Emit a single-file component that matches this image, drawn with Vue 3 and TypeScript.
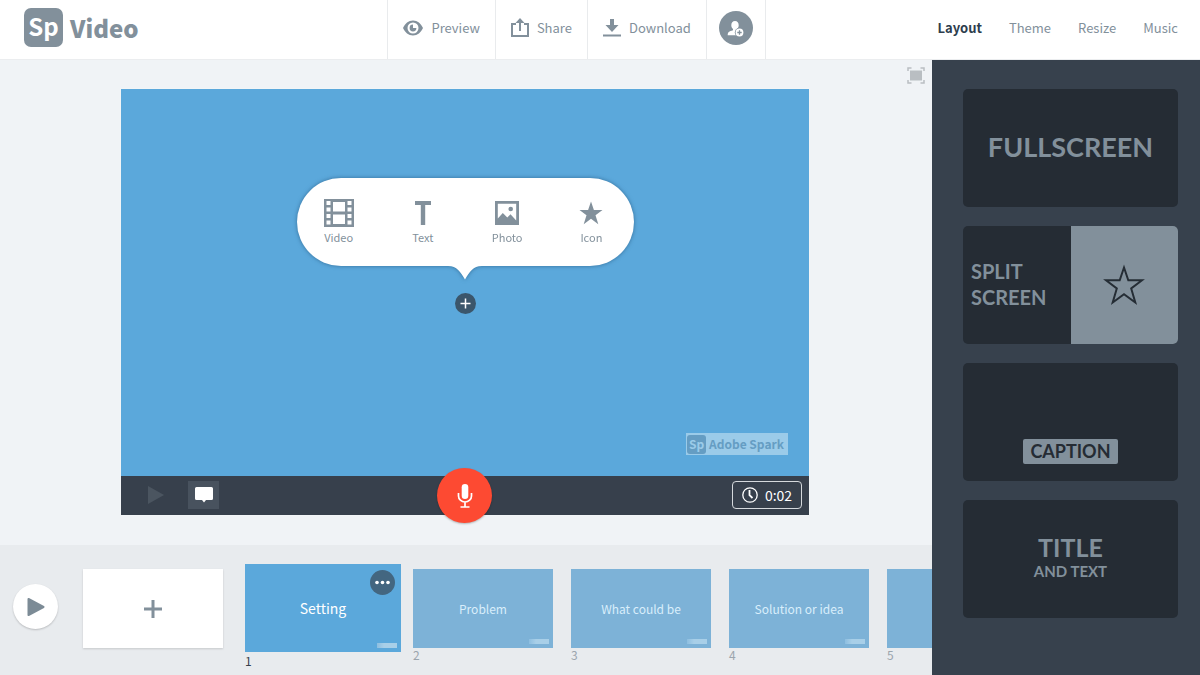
<script setup lang="ts">
import { ref } from 'vue'

interface Slide {
  id: number
  title: string
}

const tabs: string[] = ['Layout', 'Theme', 'Resize', 'Music']
const activeTab = ref<string>('Layout')

const slides: Slide[] = [
  { id: 1, title: 'Setting' },
  { id: 2, title: 'Problem' },
  { id: 3, title: 'What could be' },
  { id: 4, title: 'Solution or idea' },
  { id: 5, title: '' },
]
const activeSlide = ref<number>(1)
</script>

<template>
  <div class="app">
    <header class="header">
      <div class="brand">
        <span class="brand-mark">Sp</span>
        <h1 class="brand-name">Video</h1>
      </div>

      <div class="actions">
        <button type="button" class="action">
          <svg width="20" height="16" viewBox="0 0 20 16" aria-hidden="true">
            <path fill="currentColor" fill-rule="evenodd" d="M10 .5C5.500 .5 2 3.500 0 8c2 4.500 5.500 7.500 10 7.500s8-3 10-7.500C18 3.500 14.500 .5 10 .5Zm0 2a5.500 5.500 0 1 1 0 11a5.500 5.500 0 0 1 0-11Z" />
            <path fill="currentColor" d="M10 4.600a3.400 3.400 0 1 0 3.400 3.400H10Z" />
          </svg>
          Preview
        </button>
        <button type="button" class="action">
          <svg width="18" height="20" viewBox="0 0 18 20" fill="none" stroke="currentColor" stroke-width="2" aria-hidden="true">
            <path d="M5 6H1v12h16V6h-4M9 13V3" />
            <path fill="currentColor" stroke="none" d="M9 0l4.500 5h-9Z" />
          </svg>
          Share
        </button>
        <button type="button" class="action">
          <svg width="18" height="20" viewBox="0 0 18 20" fill="currentColor" aria-hidden="true">
            <path d="M7 1h4v6h4.500L9 14 2.500 7H7ZM0 16.500h18v2H0Z" />
          </svg>
          Download
        </button>
        <button type="button" class="action invite" aria-label="Invite">
          <svg width="34" height="34" viewBox="0 0 34 34" aria-hidden="true">
            <circle cx="17" cy="17" r="17" fill="#82909b" />
            <path fill="#fff" d="M16 10c2.400 0 3.700 1.700 3.700 4.200 0 1.600-.7 2.900-1.700 3.800v1.200l2 1-2 4H8.700c0-3.200 1.300-3.800 5.300-5v-1.200c-1-.9-1.700-2.200-1.700-3.800C12.300 11.700 13.600 10 16 10Z" />
            <circle cx="20.500" cy="21.500" r="4.700" fill="#82909b" />
            <circle cx="20.500" cy="21.500" r="3.900" fill="#fff" />
            <path stroke="#82909b" stroke-width="1.300" d="M20.500 19.300v4.400M18.300 21.500h4.400" />
          </svg>
        </button>
      </div>

      <nav class="tabs" aria-label="Panel">
        <button
          v-for="tab in tabs"
          :key="tab"
          type="button"
          class="tab"
          :class="{ active: tab === activeTab }"
          @click="activeTab = tab"
        >{{ tab }}</button>
      </nav>
    </header>

    <div class="body">
      <main class="main">
        <section class="stage">
          <button type="button" class="fullscreen" aria-label="Full screen">
            <svg width="18" height="17" viewBox="0 0 18 17" aria-hidden="true">
              <path fill="#b9bec2" d="M3 3.500h12v10H3Z" />
              <path fill="none" stroke="#b9bec2" stroke-width="1.500" d="M1 4V1h3.500M13.500 1H17v3M17 13v3h-3.500M4.500 16H1v-3" />
            </svg>
          </button>

          <div class="player">
            <div class="canvas">
              <div class="bubble">
                <button type="button" class="insert">
                  <svg width="30" height="30" viewBox="0 0 30 30" aria-hidden="true">
                    <path fill="currentColor" fill-rule="evenodd" d="M0 1h30v28H0ZM2.500 3v4h4V3ZM2.500 9.500v4h4v-4ZM2.500 16v4h4v-4ZM2.500 22.500v4h4v-4ZM23.500 3v4h4V3ZM23.500 9.500v4h4v-4ZM23.500 16v4h4v-4ZM23.500 22.500v4h4v-4ZM9 4v9.500h12V4ZM9 16.500V26h12v-9.500Z" />
                  </svg>
                  Video
                </button>
                <button type="button" class="insert">
                  <svg width="30" height="30" viewBox="0 0 30 30" aria-hidden="true">
                    <path fill="currentColor" d="M7 3h16v4h-5.800v20h-4.400V7H7Z" />
                  </svg>
                  Text
                </button>
                <button type="button" class="insert">
                  <svg width="30" height="30" viewBox="0 0 30 30" aria-hidden="true">
                    <path fill="currentColor" fill-rule="evenodd" d="M3 3h24v24H3ZM5.800 5.800v14.700l5-5.500 4.500 4.500 3.200-3.200 5.700 6.200V5.800Z" />
                    <circle cx="18.700" cy="11" r="2.300" fill="currentColor" />
                  </svg>
                  Photo
                </button>
                <button type="button" class="insert">
                  <svg width="30" height="30" viewBox="0 0 30 30" aria-hidden="true">
                    <path fill="currentColor" d="M15 3.500l2.900 8.500H26.500l-7 5.300 2.800 9-7.300-5.500-7.300 5.500 2.800-9-7-5.300h8.600Z" />
                  </svg>
                  Icon
                </button>
                <svg class="tail" width="34" height="16" viewBox="0 0 34 16" aria-hidden="true">
                  <path fill="#fff" d="M0 0H34V2C25 2 21.500 8 17 15.500 12.500 8 9 2 0 2Z" />
                </svg>
              </div>
              <button type="button" class="add-content" aria-label="Add content">
                <svg width="21" height="21" viewBox="0 0 21 21" aria-hidden="true">
                  <circle cx="10.500" cy="10.500" r="10.500" fill="#3b566b" />
                  <path stroke="#fff" stroke-width="1.500" d="M10.500 5.500v10M5.500 10.500h10" />
                </svg>
              </button>
              <div class="watermark">
                <span class="watermark-mark">Sp</span>
                <span>Adobe Spark</span>
              </div>
            </div>

            <div class="controls">
              <button type="button" class="control play-clip" aria-label="Play slide">
                <svg width="16" height="18" viewBox="0 0 16 18" aria-hidden="true">
                  <path fill="#4b5560" d="M0 0l16 9-16 9Z" />
                </svg>
              </button>
              <button type="button" class="control notes" aria-label="Notes">
                <svg width="18" height="16" viewBox="0 0 18 16" aria-hidden="true">
                  <path fill="#fff" d="M1.500 0h15A1.500 1.500 0 0 1 18 1.500v10a1.500 1.500 0 0 1-1.500 1.500H11L9 15.500 7 13H1.500A1.500 1.500 0 0 1 0 11.500v-10A1.500 1.500 0 0 1 1.500 0Z" />
                </svg>
              </button>
              <button type="button" class="record" aria-label="Record">
                <svg width="16" height="26" viewBox="0 0 16 26" aria-hidden="true">
                  <rect x="4.700" y="1" width="6.600" height="15" rx="3.300" fill="#fff" />
                  <path fill="none" stroke="#fff" stroke-width="1.700" d="M1.500 10v3a6.500 6 0 0 0 13 0v-3M8 19v4.500M3.500 24h9" />
                </svg>
              </button>
              <button type="button" class="duration">
                <svg width="16" height="16" viewBox="0 0 16 16" fill="none" stroke="#fff" aria-hidden="true">
                  <circle cx="8" cy="8" r="7.200" stroke-width="1.300" />
                  <path stroke-width="1.800" d="M7.500 3v5.200l3 2.800" />
                </svg>
                0:02
              </button>
            </div>
          </div>
        </section>

        <section class="timeline">
          <button type="button" class="play-all" aria-label="Play video">
            <svg width="18" height="20" viewBox="0 0 18 20" aria-hidden="true">
              <path fill="#7c8b96" stroke="#7c8b96" stroke-width="2" stroke-linejoin="round" d="M1.500 2L16.500 10 1.500 18Z" />
            </svg>
          </button>
          <button type="button" class="add-slide" aria-label="Add slide">
            <svg width="18" height="18" viewBox="0 0 18 18" aria-hidden="true">
              <path stroke="#82909b" stroke-width="3" d="M9 0v18M0 9h18" />
            </svg>
          </button>
          <ol class="slides">
            <li
              v-for="slide in slides"
              :key="slide.id"
              class="slide"
              :class="{ current: slide.id === activeSlide }"
            >
              <button type="button" class="thumb" :aria-label="`Slide ${slide.id}`" @click="activeSlide = slide.id">
                {{ slide.title }}
                <span class="thumb-mark"></span>
              </button>
              <button v-if="slide.id === activeSlide" type="button" class="more" aria-label="Slide options">
                <svg width="25" height="25" viewBox="0 0 25 25" fill="#fff" aria-hidden="true">
                  <circle cx="7" cy="12.500" r="1.800" />
                  <circle cx="12.500" cy="12.500" r="1.800" />
                  <circle cx="18" cy="12.500" r="1.800" />
                </svg>
              </button>
              <span class="slide-number">{{ slide.id }}</span>
            </li>
          </ol>
        </section>
      </main>

      <aside class="sidebar" aria-label="Layouts">
        <button type="button" class="layout fullscreen-card">FULLSCREEN</button>
        <button type="button" class="layout split-card">
          <span class="split-text">SPLIT<br />SCREEN</span>
          <span class="split-picture">
            <svg width="42" height="42" viewBox="0 0 42 42" aria-hidden="true">
              <path fill="none" stroke="#252d35" stroke-width="2" d="M21 3.500l4.300 12.700H39L28.200 24.500 32.300 38.500 21 30.300 9.700 38.500l4.100-14L3 16.200H16.700Z" />
            </svg>
          </span>
        </button>
        <button type="button" class="layout caption-card">
          <span class="caption">CAPTION</span>
        </button>
        <button type="button" class="layout title-card">
          <span class="title">TITLE</span>
          <span class="subtitle">AND TEXT</span>
        </button>
      </aside>
    </div>
  </div>
</template>

<style>
body {
  margin: 0;
}
</style>

<style scoped>
.app {
  display: flex;
  flex-direction: column;
  min-height: 100vh;
  color: #82909b;
  background: #f0f3f6;
  font-family: "Noto Sans CJK SC", "Noto Sans", sans-serif;
  font-size: 13px;
  line-height: 20px;
}

.app,
.app * {
  box-sizing: border-box;
}

button {
  margin: 0;
  padding: 0;
  border: 0;
  background: none;
  color: inherit;
  font: inherit;
  cursor: pointer;
}

svg {
  display: block;
  flex: none;
}

.header {
  display: grid;
  grid-template-columns: minmax(160px, 387fr) auto minmax(0, 166fr) 268px;
  height: 60px;
  background: #fff;
  border-bottom: 1px solid #ebedef;
}

.brand {
  display: flex;
  align-items: center;
  gap: 7px;
  padding: 0 0 4px 24px;
}

.brand-mark {
  width: 39px;
  height: 39px;
  border-radius: 7px;
  background: #82909b;
  color: #fff;
  font-size: 24px;
  font-weight: 700;
  line-height: 36px;
  text-align: center;
}

.brand-name {
  margin: 0;
  font-size: 24px;
  font-weight: 900;
  line-height: 36px;
}

.actions {
  display: flex;
  border-left: 1px solid #e9ebed;
}

.action {
  display: flex;
  align-items: center;
  gap: 8px;
  padding: 0 15px 4px;
  border-right: 1px solid #e9ebed;
}

.invite {
  padding: 0 12px 4px;
}

.tabs {
  display: flex;
  grid-column: 4;
  align-items: center;
  justify-content: flex-end;
  gap: 27px;
  padding: 0 22px 4px 0;
}

.tab.active {
  color: #2d3d4d;
  font-weight: 700;
}

.body {
  display: flex;
  flex: 1;
}

.main {
  display: flex;
  flex: 1;
  flex-direction: column;
  min-width: 0;
}

.stage {
  position: relative;
  flex: 1;
  padding: 29px 123px 30px 121px;
}

.fullscreen {
  position: absolute;
  top: 7px;
  right: 7px;
}

.player {
  box-shadow: 0 0 1px #fff;
}

.canvas {
  position: relative;
  display: flex;
  flex-direction: column;
  align-items: center;
  aspect-ratio: 16 / 9;
  padding-top: 89px;
  background: #5ba8db;
}

.bubble {
  position: relative;
  display: flex;
  align-items: center;
  width: 337px;
  height: 88px;
  border-radius: 44px;
  background: #fff;
  filter: drop-shadow(0 0 2px rgb(30 80 120 / 65%));
}

.insert {
  display: flex;
  flex: 1;
  flex-direction: column;
  align-items: center;
  font-size: 11px;
  line-height: 18px;
}

.tail {
  position: absolute;
  top: 86px;
  left: calc(50% - 17px);
}

.add-content {
  margin-top: 27px;
}

.watermark {
  position: absolute;
  right: 21px;
  bottom: 21px;
  display: flex;
  align-items: center;
  gap: 3px;
  height: 22px;
  padding: 0 4px 0 1px;
  background: #9bcbe9;
  color: #659dc3;
  font-size: 12px;
  font-weight: 700;
}

.watermark-mark {
  width: 19px;
  height: 19px;
  border-radius: 3px;
  background: #659dc3;
  color: #9bcbe9;
  line-height: 18px;
  text-align: center;
}

.controls {
  position: relative;
  display: flex;
  align-items: center;
  gap: 11px;
  height: 39px;
  padding: 0 7px 2px 13px;
  background: #37404c;
}

.control {
  display: flex;
  align-items: center;
  justify-content: center;
  height: 28px;
}

.play-clip {
  width: 43px;
}

.notes {
  width: 31px;
  background: #48525e;
}

.record {
  position: absolute;
  top: -8px;
  left: calc(50% - 28px);
  display: flex;
  align-items: center;
  justify-content: center;
  width: 55px;
  height: 55px;
  border-radius: 50%;
  background: #fd4a32;
  box-shadow: 0 1px 2px rgb(0 0 0 / 25%);
}

.duration {
  display: flex;
  align-items: center;
  justify-content: center;
  gap: 7px;
  width: 70px;
  height: 28px;
  margin-left: auto;
  border: 1px solid #d5d9dd;
  border-radius: 4px;
  color: #fff;
  font-size: 14px;
}

.timeline {
  display: flex;
  height: 130px;
  padding: 19px 0 0 13px;
  background: #e8ebee;
}

.play-all {
  display: flex;
  flex: none;
  align-items: center;
  justify-content: center;
  width: 45px;
  height: 45px;
  margin: 20px 25px 0 0;
  border-radius: 50%;
  background: #fff;
  box-shadow: 0 1px 2px rgb(0 0 0 / 20%);
}

.add-slide {
  display: flex;
  flex: none;
  align-items: center;
  justify-content: center;
  width: 140px;
  height: 79px;
  margin: 5px 22px 0 0;
  background: #fff;
  box-shadow: 0 1px 2px rgb(0 0 0 / 15%);
}

.slides {
  display: flex;
  flex: 1;
  gap: 18px;
  min-width: 0;
  margin: 0;
  padding: 0;
  overflow: hidden;
  list-style: none;
}

.slide {
  position: relative;
  flex: none;
  width: 140px;
  padding-top: 5px;
  color: #9ba5ad;
  font-size: 12px;
  line-height: 14px;
}

.slide.current {
  width: 156px;
  margin-right: -6px;
  padding-top: 0;
  color: #37404c;
  line-height: 18px;
}

.thumb {
  position: relative;
  display: block;
  width: 100%;
  height: 79px;
  background: #7db2d7;
  color: #d9eefb;
  font-size: 12px;
}

.current .thumb {
  height: 88px;
  background: #5ba8db;
  color: #fff;
  font-size: 14px;
}

.thumb-mark {
  position: absolute;
  right: 4px;
  bottom: 4px;
  width: 20px;
  height: 5px;
  background: linear-gradient(to right, #8dbee0, #a8cfe8 35%);
}

.more {
  position: absolute;
  top: 6px;
  right: 6px;
  border-radius: 50%;
  background: #436680;
}

.slide-number {
  display: block;
}

.sidebar {
  display: flex;
  flex: none;
  flex-direction: column;
  gap: 19px;
  width: 268px;
  padding: 29px 22px 29px 31px;
  background: #37414d;
}

.layout {
  display: flex;
  height: 118px;
  overflow: hidden;
  border-radius: 5px;
  background: #252c34;
  color: #82909b;
  font-family: Lato, sans-serif;
  font-weight: 700;
}

.fullscreen-card {
  align-items: center;
  justify-content: center;
  padding-bottom: 3px;
  font-size: 27px;
}

.split-card {
  font-size: 20px;
  line-height: 26px;
  text-align: left;
}

.split-text,
.split-picture {
  display: flex;
  align-items: center;
  align-self: stretch;
  width: 50%;
}

.split-text {
  padding: 0 0 3px 8px;
}

.split-picture {
  justify-content: center;
  background: #82909b;
}

.caption-card {
  align-items: flex-end;
  justify-content: center;
  padding-bottom: 17px;
}

.caption {
  padding: 0 7px;
  border-radius: 2px;
  background: #82909b;
  color: #252c34;
  font-size: 18px;
  line-height: 25px;
}

.title-card {
  flex-direction: column;
  align-items: center;
  justify-content: center;
  padding-bottom: 3px;
}

.title {
  font-size: 25px;
  line-height: 27px;
}

.subtitle {
  font-size: 15px;
  line-height: 20px;
}
</style>
